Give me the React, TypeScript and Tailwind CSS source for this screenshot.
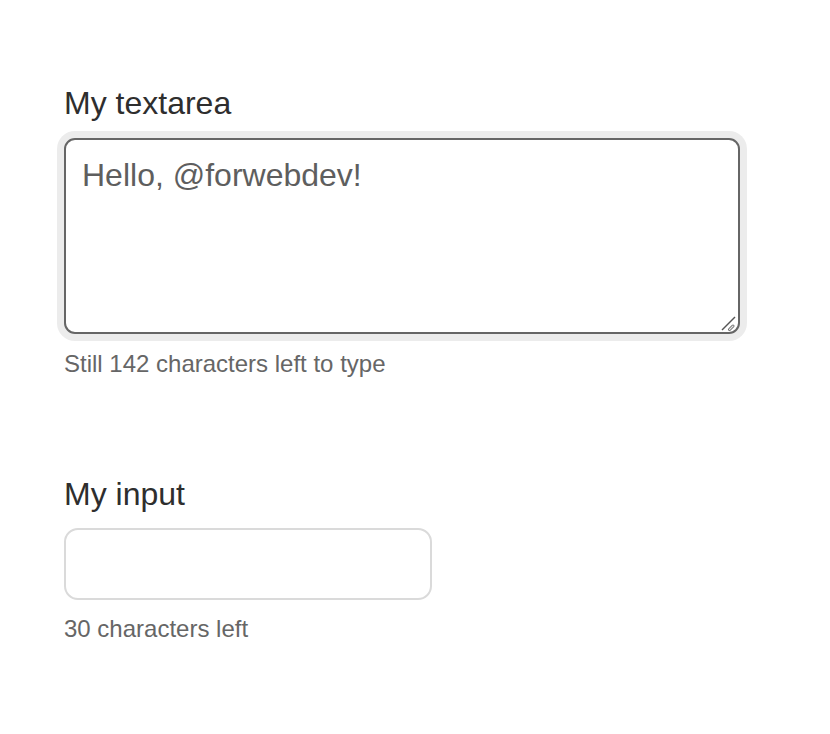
import React, { useState } from "react";

export default function App() {
  const [text, setText] = useState("Hello, @forwebdev!");
  const [value, setValue] = useState("");
  return (
    <div
      className="min-h-[734px] w-[830px] bg-white pl-16 pt-[85px]"
      style={{ fontFamily: '"Liberation Sans", Arial, Helvetica, sans-serif' }}
    >
      <label className="block text-[32px] leading-[36px] text-[#2e2e2e]">My textarea</label>
      <div className="relative mt-[17px] w-[676px]">
        <textarea
          value={text}
          onChange={(e) => setText(e.target.value)}
          className="block h-[196px] w-[676px] resize-none rounded-[11px] border-2 border-[#666666] bg-white px-4 pb-4 pt-[17px] text-[32px] leading-[37px] text-[#5e5e5e] shadow-[0_0_0_7px_#ececec] outline-none"
          style={{ fontFamily: '"Liberation Sans", Arial, Helvetica, sans-serif' }}
        />
        <svg
          className="pointer-events-none absolute bottom-[1px] right-[1px]"
          width="18"
          height="18"
          viewBox="0 0 18 18"
        >
          <line x1="1" y1="15" x2="14" y2="2" stroke="#555" strokeWidth="1.4" />
          <line x1="8.5" y1="14.5" x2="12" y2="11" stroke="#666" strokeWidth="3" strokeLinecap="round" />
          <line x1="8.5" y1="14.5" x2="12" y2="11" stroke="#e4e4e4" strokeWidth="1.2" strokeLinecap="round" />
        </svg>
      </div>
      <p className="mt-4 text-[24px] leading-[28px] text-[#666666]">
        Still {160 - text.length} characters left to type
      </p>

      <label className="mt-[98px] block text-[32px] leading-[36px] text-[#2e2e2e]">My input</label>
      <input
        value={value}
        onChange={(e) => setValue(e.target.value)}
        className="mt-[16px] block h-[72px] w-[368px] rounded-[14px] border-2 border-[#dadada] bg-white px-4 text-[32px] text-[#5e5e5e] outline-none"
        style={{ fontFamily: '"Liberation Sans", Arial, Helvetica, sans-serif' }}
      />
      <p className="mt-[15px] text-[24px] leading-[28px] text-[#666666]">
        {30 - value.length} characters left
      </p>
    </div>
  );
}
